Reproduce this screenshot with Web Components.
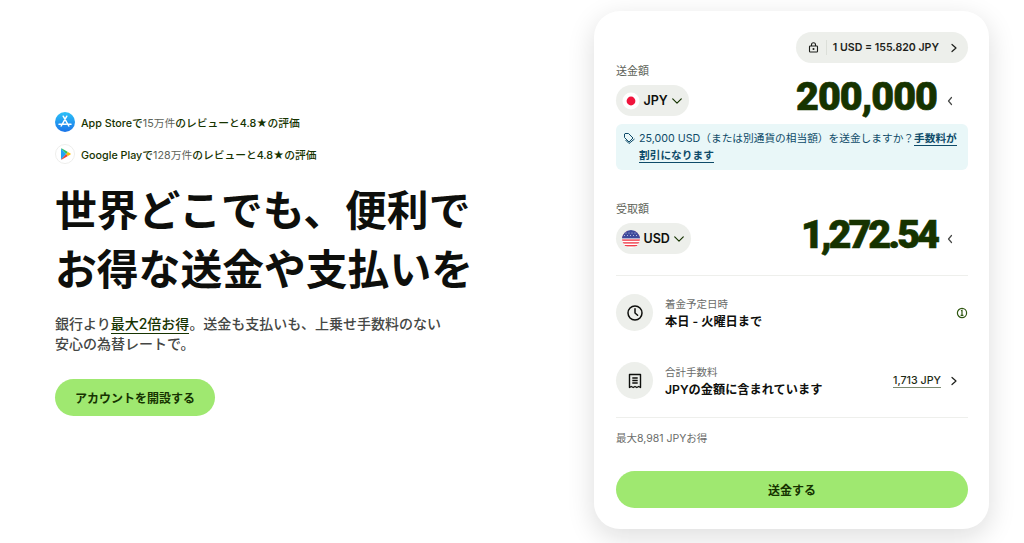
<!DOCTYPE html>
<html lang="ja">
<head>
<meta charset="utf-8">
<title>Wise</title>
<style>
  html, body { margin: 0; padding: 0; background: #fff; }
  body {
    width: 1024px; height: 543px; overflow: hidden;
    font-family: Inter, "Noto Sans CJK JP", sans-serif;
    color: #0e0f0c;
  }
</style>
</head>
<body>
<landing-page>
  <hero-panel slot="left">
    <store-rating slot="ratings" store="apple"><b>App Storeで</b><i>15万件</i><b>のレビューと4.8★の評価</b></store-rating>
    <store-rating slot="ratings" store="google"><b>Google Playで</b><i>128万件</i><b>のレビューと4.8★の評価</b></store-rating>
  </hero-panel>
  <transfer-card slot="right"></transfer-card>
</landing-page>

<script>
const define = (name, html, init) => {
  customElements.define(name, class extends HTMLElement {
    constructor() {
      super();
      this.attachShadow({ mode: 'open' });
    }
    connectedCallback() {
      this.shadowRoot.innerHTML = typeof html === 'function' ? html(this) : html;
      if (init) init(this);
    }
  });
};

define('landing-page', `
  <style>
    :host { display: flex; width: 1024px; height: 543px; box-sizing: border-box; padding: 11px 35px 14px 55px; justify-content: space-between; }
  </style>
  <slot name="left"></slot>
  <slot name="right"></slot>
`);

const ICONS = {
  apple: `<svg width="20" height="20" viewBox="0 0 20 20"><defs><linearGradient id="a" x1="0" y1="0" x2="0" y2="1"><stop offset="0" stop-color="#2cc1f8"/><stop offset="1" stop-color="#1a74e8"/></linearGradient></defs><circle cx="10" cy="10" r="10" fill="url(#a)"/><path d="M11.8 4.2 6.2 14M8.2 4.2 13.8 14M4 12.2h7.2M12.4 12.2H16" stroke="#fff" stroke-width="1.5" stroke-linecap="round" fill="none"/></svg>`,
  google: `<svg width="20" height="20" viewBox="0 0 20 20"><circle cx="10" cy="10" r="9.5" fill="#fff" stroke="#eeeeec"/><path d="M6 4.6v10.8L11.3 10z" fill="#20a4f3"/><path d="M6 4.6c.2-.2.5-.2.9 0l6 3.5L11.3 10z" fill="#2fbf62"/><path d="M6 15.4c.2.2.5.2.9 0l6-3.5L11.3 10z" fill="#ea4335"/><path d="m12.9 8.1 2.6 1.5c.3.2.3.6 0 .8l-2.6 1.5L11.3 10z" fill="#fbbc04"/></svg>`
};

define('store-rating', host => `
  <style>
    :host { display: flex; align-items: center; gap: 6px; height: 20px; font-size: 10.75px; color: #163300; }
    svg { flex: none; display: block; }
    ::slotted(b) { font-weight: 500; }
    ::slotted(i) { font-style: normal; font-weight: 400; color: #5d6359; }
  </style>
  ${ICONS[host.getAttribute('store')]}
  <span><slot></slot></span>
`);

define('pill-button', `
  <style>
    :host { display: flex; align-items: center; justify-content: center; background: #9fe870; color: #163300; border-radius: 999px; font-weight: 600; box-sizing: border-box; padding-bottom: 1px; }
  </style>
  <slot></slot>
`);

define('hero-panel', `
  <style>
    :host { display: block; width: 480px; padding-top: 101px; }
    .ratings { display: flex; flex-direction: column; gap: 12px; }
    h1 { margin: 18px 0 0; font-size: 41.8px; line-height: 59px; font-weight: 700; color: #0e0f0c; white-space: nowrap; }
    p { margin: 14px 0 0; font-size: 14px; line-height: 20px; font-weight: 500; color: #454745; white-space: nowrap; }
    u { text-decoration: none; color: #163300; font-weight: 500; border-bottom: 1px solid #163300; padding-bottom: 1px; }
    pill-button { width: 160px; height: 37px; margin-top: 25px; font-size: 12px; }
  </style>
  <div class="ratings"><slot name="ratings"></slot></div>
  <h1>世界どこでも、便利で<br>お得な送金や支払いを</h1>
  <p>銀行より<u>最大2倍お得</u>。送金も支払いも、上乗せ手数料のない<br>安心の為替レートで。</p>
  <pill-button>アカウントを開設する</pill-button>
`);

const FLAGS = {
  JPY: `<svg width="18" height="18" viewBox="0 0 18 18"><circle cx="9" cy="9" r="8.500" fill="#fff"/><circle cx="9" cy="9" r="4.400" fill="#f0143c"/></svg>`,
  USD: `<svg width="18" height="18" viewBox="0 0 18 18"><defs><clipPath id="c"><circle cx="9" cy="9" r="9"/></clipPath></defs><g clip-path="url(#c)"><rect width="18" height="18" fill="#fff"/><g fill="#ef3f4c"><rect y="1" width="18" height="1.400"/><rect y="3.800" width="18" height="1.400"/><rect y="6.600" width="18" height="1.400"/><rect y="9.400" width="18" height="1.400"/><rect y="12.200" width="18" height="1.400"/><rect y="15" width="18" height="1.400"/></g><rect width="18" height="8.400" fill="#3f4a9c"/><g fill="#dfe2f3"><circle cx="4" cy="3" r=".5"/><circle cx="7" cy="3" r=".5"/><circle cx="10" cy="3" r=".5"/><circle cx="13" cy="3" r=".5"/><circle cx="2.500" cy="5.500" r=".5"/><circle cx="5.500" cy="5.500" r=".5"/><circle cx="8.500" cy="5.500" r=".5"/><circle cx="11.500" cy="5.500" r=".5"/><circle cx="14.500" cy="5.500" r=".5"/></g></g></svg>`
};

define('amount-row', host => `
  <style>
    :host { display: block; }
    .label { font-size: 11px; line-height: 14px; color: #5d6359; }
    .row { display: flex; align-items: center; justify-content: space-between; margin-top: 7px; height: 31px; }
    .cur { display: flex; align-items: center; gap: 3.500px; height: 31px; padding: 0 6px; background: #edefeb; border-radius: 999px; font-size: 12.500px; font-weight: 600; }
    .cur svg { display: block; }
    .val { display: flex; align-items: center; gap: 9px; padding-right: 14px; }
    .num { font-family: Roboto, sans-serif; font-size: 39.500px; font-weight: 900; letter-spacing: ${host.getAttribute('spacing')}; color: #163300; line-height: 31px; margin-bottom: 9px; -webkit-text-stroke: .7px #163300; }
  </style>
  <div class="label">${host.getAttribute('label')}</div>
  <div class="row">
    <div class="cur">${FLAGS[host.getAttribute('cur')]}<span>${host.getAttribute('cur')}</span>
      <svg width="12" height="12" viewBox="0 0 14 14" fill="none" stroke="#163300" stroke-width="1.4" stroke-linecap="round" stroke-linejoin="round"><path d="m2 4.500 5 5 5-5"/></svg>
    </div>
    <div class="val"><span class="num">${host.getAttribute('value')}</span>
      <svg width="8" height="10" viewBox="0 0 8 10" fill="none" stroke="#454745" stroke-width="1.2" stroke-linecap="round" stroke-linejoin="round"><path d="M5.500 1.500 2.500 5l3 3.500"/></svg>
    </div>
  </div>
`);

define('info-row', host => `
  <style>
    :host { display: flex; align-items: center; gap: 12px; height: 37px; }
    .ic { flex: none; width: 37px; height: 37px; border-radius: 50%; background: #edefeb; display: flex; align-items: center; justify-content: center; }
    .txt { flex: 1; min-width: 0; padding-top: 2px; }
    .k { font-size: 10.500px; line-height: 15px; color: #6a6c6a; }
    .v { font-size: 12.200px; line-height: 19px; font-weight: 600; color: #0e0f0c; }
    .end { display: flex; align-items: center; }
    svg { display: block; }
  </style>
  <div class="ic"><slot name="icon"></slot></div>
  <div class="txt"><div class="k">${host.getAttribute('label')}</div><div class="v">${host.getAttribute('value')}</div></div>
  <div class="end"><slot name="end"></slot></div>
`);

define('transfer-card', `
  <style>
    :host { display: block; width: 395px; height: 518px; box-sizing: border-box; background: #fff; border-radius: 26px; padding: 21px 21px 0 22px;
      box-shadow: 0 8px 28px rgba(14,15,12,.14); }
    .rate-wrap { display: flex; justify-content: flex-end; }
    .rate { display: flex; align-items: center; height: 31px; padding: 0 9px 0 12px; background: #edefeb; border-radius: 999px; font-size: 10.600px; font-weight: 600; color: #1d1f1b; }
    .rate .sep { width: 1px; height: 15px; background: #dcdfd9; margin: 0 6px 0 7px; }
    .rate .chev { margin-left: 10px; }
    svg { display: block; }
    .send { margin-top: 1px; }
    .note { display: flex; gap: 3px; margin-top: 8px; padding: 6px 8px 6px 7px; background: #e9f7f8; border-radius: 6px; height: 46px; box-sizing: border-box; font-size: 10.700px; line-height: 17px; color: #0e4b69; }
    .note svg { flex: none; margin-top: 2px; }
    .note div { width: 322px; }
    .note u { text-decoration: none; font-weight: 600; border-bottom: 1px solid #0e4b69; }
    .recv { margin-top: 32px; }
    hr { border: 0; border-top: 1px solid #eeefec; margin: 0; }
    .h1 { margin-top: 21px; }
    .rows { display: flex; flex-direction: column; gap: 31px; padding: 18px 0 18px; }
    .fee { display: flex; align-items: center; gap: 8px; font-size: 10.700px; font-weight: 500; color: #1d2a14; margin-right: 9px; }
    .fee span { border-bottom: 1px solid #7c8a71; line-height: 13px; }
    .save { margin-top: 13px; font-size: 10.500px; line-height: 16px; color: #6a6c6a; }
    pill-button { height: 37px; margin-top: 24px; font-size: 12px; }
  </style>
  <div class="rate-wrap"><div class="rate">
    <svg width="11" height="11" viewBox="0 0 11 11" fill="none" stroke="#1d1f1b" stroke-width="1.100"><rect x="1.500" y="4" width="8" height="6" rx=".8"/><path d="M3.500 4V2.800a2 2 0 0 1 4 0V4"/><circle cx="5.500" cy="7" r=".5" fill="#1d1f1b"/></svg>
    <span class="sep"></span><span>1 USD = 155.820 JPY</span>
    <svg class="chev" width="10" height="10" viewBox="0 0 10 10" fill="none" stroke="#1d1f1b" stroke-width="1.200" stroke-linecap="round" stroke-linejoin="round"><path d="M3 1.500 7 5 3 8.500"/></svg>
  </div></div>
  <amount-row class="send" label="送金額" cur="JPY" value="200,000" spacing="-1px"></amount-row>
  <div class="note">
    <svg width="13" height="13" viewBox="0 0 13 13" fill="none" stroke="#0e4b69" stroke-width="1" stroke-linejoin="round"><path d="M1.500 2v3.500l4.500 4.500 4-4L5.500 1.500H2z"/><path d="m2.500 8 3.500 3.500L11.500 7"/></svg>
    <div>25,000 USD（または別通貨の相当額）を送金しますか？<u>手数料が</u><br><u>割引になります</u></div>
  </div>
  <amount-row class="recv" label="受取額" cur="USD" value="1,272.54" spacing="-3px"></amount-row>
  <hr class="h1">
  <div class="rows">
    <info-row label="着金予定日時" value="本日 - 火曜日まで">
      <svg slot="icon" width="18" height="18" viewBox="0 0 18 18" fill="none" stroke="#0e0f0c" stroke-width="1.500" stroke-linecap="round" stroke-linejoin="round"><circle cx="9" cy="9" r="7"/><path d="M9 4.800V9l2.600 2.200"/></svg>
      <svg slot="end" width="12" height="12" viewBox="0 0 12 12" fill="none" stroke="#2f5711" stroke-width="1.200"><circle cx="6" cy="6" r="4.600"/><path d="M5 3.800 6 3.400v5M4.600 8.400h2.800"/></svg>
    </info-row>
    <info-row label="合計手数料" value="JPYの金額に含まれています">
      <svg slot="icon" width="18" height="18" viewBox="0 0 18 18" fill="none" stroke="#0e0f0c" stroke-width="1.400" stroke-linejoin="round"><path d="M3.500 2.500h11v13l-1.800-1-1.900 1-1.800-1-1.800 1-1.900-1-1.800 1z"/><path d="M6.300 6h5.400M6.300 8.500h5.400M6.300 11h5.400"/></svg>
      <div slot="end" class="fee"><span>1,713 JPY</span>
        <svg width="10" height="10" viewBox="0 0 10 10" fill="none" stroke="#1d1f1b" stroke-width="1.200" stroke-linecap="round" stroke-linejoin="round"><path d="M3 1.500 7 5 3 8.500"/></svg>
      </div>
    </info-row>
  </div>
  <hr>
  <div class="save">最大8,981 JPYお得</div>
  <pill-button>送金する</pill-button>
`);
</script>
</body>
</html>
